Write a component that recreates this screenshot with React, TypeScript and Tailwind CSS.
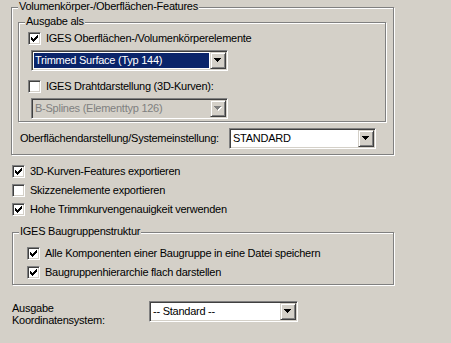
import React from 'react';

const Check = () => (
  <svg width="7" height="7" viewBox="0 0 7 7" shapeRendering="crispEdges" className="absolute left-[2px] top-[2px]">
    <rect x="0" y="2" width="1" height="3" fill="#000" />
    <rect x="1" y="3" width="1" height="3" fill="#000" />
    <rect x="2" y="4" width="1" height="3" fill="#000" />
    <rect x="3" y="3" width="1" height="3" fill="#000" />
    <rect x="4" y="2" width="1" height="3" fill="#000" />
    <rect x="5" y="1" width="1" height="3" fill="#000" />
    <rect x="6" y="0" width="1" height="3" fill="#000" />
  </svg>
);

const CheckBox: React.FC<{ checked?: boolean }> = ({ checked }) => (
  <div className="relative w-[13px] h-[13px] shrink-0 bg-white border border-t-[#808080] border-l-[#808080] border-b-white border-r-white shadow-[inset_1px_1px_0_#404040,inset_-1px_-1px_0_#d4d0c8]">
    {checked && <Check />}
  </div>
);

const Arrow: React.FC<{ disabled?: boolean }> = ({ disabled }) => (
  <svg width="8" height="5" viewBox="0 0 8 5" shapeRendering="crispEdges">
    {disabled && (
      <g fill="#fff">
        <rect x="1" y="1" width="7" height="1" />
        <rect x="2" y="2" width="5" height="1" />
        <rect x="3" y="3" width="3" height="1" />
        <rect x="4" y="4" width="1" height="1" />
      </g>
    )}
    <g fill={disabled ? '#808080' : '#000'}>
      <rect x="0" y="0" width="7" height="1" />
      <rect x="1" y="1" width="5" height="1" />
      <rect x="2" y="2" width="3" height="1" />
      <rect x="3" y="3" width="1" height="1" />
    </g>
  </svg>
);

interface ComboProps {
  value: string;
  width: string;
  selected?: boolean;
  disabled?: boolean;
}

const Combo: React.FC<ComboProps> = ({ value, width, selected, disabled }) => (
  <div
    className={`${width} h-[21px] shrink-0 flex p-[1px] border border-t-[#808080] border-l-[#808080] border-b-white border-r-white shadow-[inset_1px_1px_0_#404040,inset_-1px_-1px_0_#d4d0c8] ${
      disabled ? 'bg-[#d4d0c8]' : 'bg-white'
    }`}
  >
    <div className="flex-1 min-w-0 flex items-center pr-[1px]">
      <div
        className={`flex-1 h-[15px] ml-[1px] pl-[1px] flex items-center whitespace-nowrap ${
          selected ? 'bg-[#0a246a] text-white' : disabled ? 'text-[#808080]' : 'text-black'
        }`}
      >
        {value}
      </div>
    </div>
    <div className="w-[16px] h-[17px] flex items-center justify-center bg-[#d4d0c8] border border-t-[#d4d0c8] border-l-[#d4d0c8] border-b-[#404040] border-r-[#404040] shadow-[inset_1px_1px_0_#fff,inset_-1px_-1px_0_#808080]">
      <Arrow disabled={disabled} />
    </div>
  </div>
);

const GroupBox: React.FC<{ title: string; className: string; children: React.ReactNode }> = ({
  title,
  className,
  children,
}) => (
  <div className={`relative border border-[#808080] shadow-[inset_1px_1px_0_#fff,1px_1px_0_#fff] ${className}`}>
    <div className="absolute -top-[8px] left-[6px] px-[1px] bg-[#d4d0c8] leading-[13px] whitespace-nowrap">
      {title}
    </div>
    {children}
  </div>
);

const CheckRow: React.FC<{ checked?: boolean; label: string; className?: string }> = ({
  checked,
  label,
  className = '',
}) => (
  <div className={`h-[13px] flex items-center gap-[5px] whitespace-nowrap ${className}`}>
    <CheckBox checked={checked} />
    <span className="leading-[13px]">{label}</span>
  </div>
);

export default function App() {
  return (
    <div className="w-[451px] h-[343px] overflow-hidden bg-[#d4d0c8] text-black text-[11px] tracking-[-0.25px] font-['Liberation_Sans',Arial,sans-serif] pt-[7px]">
      <GroupBox title="Volumenkörper-/Oberflächen-Features" className="ml-[11px] w-[383px] h-[148px]">
        <GroupBox title="Ausgabe als" className="mt-[14px] ml-[6px] w-[368px] h-[100px]">
          <CheckRow checked label="IGES Oberflächen-/Volumenkörperelemente" className="mt-[9px] ml-[9px] gap-[4px]" />
          <div className="mt-[5px] ml-[12px]">
            <Combo value="Trimmed Surface (Typ 144)" width="w-[197px]" selected />
          </div>
          <CheckRow label="IGES Drahtdarstellung (3D-Kurven):" className="mt-[9px] ml-[9px] gap-[4px]" />
          <div className="mt-[5px] ml-[12px]">
            <Combo value="B-Splines (Elementtyp 126)" width="w-[197px]" disabled />
          </div>
        </GroupBox>
        <div className="mt-[6px] flex items-center">
          <span className="ml-[8px] whitespace-nowrap">Oberflächendarstellung/Systemeinstellung:</span>
          <div className="ml-auto mr-[17px]">
            <Combo value="STANDARD" width="w-[147px]" />
          </div>
        </div>
      </GroupBox>

      <div className="ml-[12px] mt-[10px] flex flex-col gap-[6px]">
        <CheckRow checked label="3D-Kurven-Features exportieren" />
        <CheckRow label="Skizzenelemente exportieren" />
        <CheckRow checked label="Hohe Trimmkurvengenauigkeit verwenden" />
      </div>

      <GroupBox title="IGES Baugruppenstruktur" className="mt-[16px] ml-[12px] w-[382px] h-[53px]">
        <div className="mt-[14px] ml-[14px] flex flex-col gap-[6px]">
          <CheckRow checked label="Alle Komponenten einer Baugruppe in eine Datei speichern" />
          <CheckRow checked label="Baugruppenhierarchie flach darstellen" />
        </div>
      </GroupBox>

      <div className="mt-[16px] flex items-start">
        <div className="ml-[12px] w-[137px] pt-[1px] leading-[12px]">
          Ausgabe
          <br />
          Koordinatensystem:
        </div>
        <Combo value="-- Standard --" width="w-[149px]" />
      </div>
    </div>
  );
}
